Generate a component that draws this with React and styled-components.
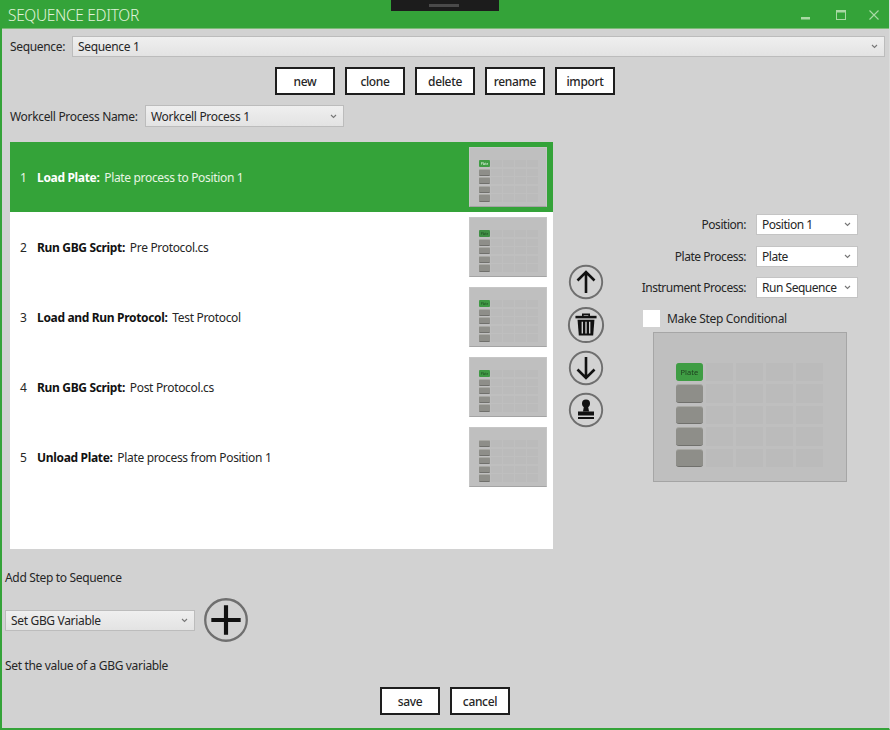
import React from 'react';
import styled, { createGlobalStyle } from 'styled-components';

const GREEN = '#34a339';

const GlobalStyle = createGlobalStyle`
  html, body {
    margin: 0;
    padding: 0;
    height: 100%;
    background: #d2d2d2;
  }
  body {
    font-family: "Noto Sans", "Open Sans", sans-serif;
    font-size: 12px;
    letter-spacing: -0.33px;
    color: #262626;
  }
`;

const Window = styled.div`
  position: relative;
  box-sizing: border-box;
  width: 890px;
  height: 730px;
  overflow: hidden;
  background: #d2d2d2;
  border-left: 2px solid ${GREEN};
  border-bottom: 2px solid ${GREEN};
  border-right: 1px solid #dcdcdc;
`;

const TitleBar = styled.div`
  display: flex;
  align-items: center;
  justify-content: space-between;
  height: 29px;
  margin-left: -2px;
  padding: 1px 5px 0 8px;
  background: ${GREEN};
  border-bottom: 1px solid #7dbb78;
  box-sizing: border-box;
`;

const Title = styled.div`
  font-size: 15.5px;
  font-weight: 300;
  color: #e0f3da;
`;

const WindowControls = styled.div`
  display: flex;
  align-items: center;
  gap: 23px;
  padding-right: 5px;
`;

const DragHandle = styled.div`
  position: absolute;
  top: 0;
  left: 389px;
  width: 108px;
  height: 11px;
  background: #1c1c1c;
  &::after {
    content: '';
    position: absolute;
    left: 38px;
    top: 4px;
    width: 30px;
    height: 3px;
    background: #4a4a4a;
  }
`;

const SequenceRow = styled.div`
  display: flex;
  align-items: center;
  margin: 7px 4px 0 8px;
`;

const FieldLabel = styled.div`
  flex: none;
  width: ${(p) => p.$width}px;
`;

const Dropdown = styled.div`
  display: flex;
  align-items: center;
  justify-content: space-between;
  box-sizing: border-box;
  flex: ${(p) => (p.$width ? 'none' : '1')};
  width: ${(p) => (p.$width ? `${p.$width}px` : 'auto')};
  height: ${(p) => p.$height || 21}px;
  padding: 0 6px 0 5px;
  border: 1px solid ${(p) => (p.$plain ? '#c4c4c4' : '#bcbcbc')};
  background: ${(p) => (p.$plain ? '#fff' : 'linear-gradient(#efefef, #e3e3e3)')};
  white-space: nowrap;
`;

const ButtonRow = styled.div`
  display: flex;
  justify-content: center;
  gap: 10px;
  margin: ${(p) => p.$top}px 1px 0 0;
`;

const ActionButton = styled.button`
  box-sizing: border-box;
  width: 60px;
  height: 28px;
  padding: 0;
  background: #fff;
  border: 2px solid #1e1e1e;
  font: inherit;
  font-weight: 500;
  letter-spacing: inherit;
  color: #262626;
`;

const WorkcellRow = styled.div`
  display: flex;
  align-items: center;
  margin: 10px 0 0 8px;
`;

const EditorRow = styled.div`
  display: flex;
  margin: 15px 0 0 8px;
`;

const StepList = styled.div`
  flex: none;
  width: 543px;
  height: 407px;
  background: #fff;
`;

const StepRow = styled.div`
  display: flex;
  align-items: center;
  box-sizing: border-box;
  height: 70px;
  padding: 0 6px 0 10px;
  background: ${(p) => (p.$selected ? GREEN : 'transparent')};
  color: ${(p) => (p.$selected ? '#e8f5e4' : '#262626')};
`;

const StepNumber = styled.span`
  flex: none;
  width: 17px;
`;

const StepName = styled.strong`
  font-weight: 700;
  margin-right: 2px;
  color: ${(p) => (p.$selected ? '#fff' : '#111')};
`;

const StepText = styled.div`
  flex: 1;
`;

const ActionColumn = styled.div`
  flex: none;
  display: flex;
  flex-direction: column;
  align-items: center;
  justify-content: center;
  gap: 6px;
  width: 38px;
  margin-left: 14px;
  height: 407px;
`;

const RoundButton = styled.div`
  display: flex;
  line-height: 0;
`;

const SidePanel = styled.div`
  flex: none;
  display: flex;
  flex-direction: column;
  align-items: flex-start;
  width: 218px;
  margin-left: 37px;
  padding-top: 72px;
`;

const PropertyRow = styled.div`
  display: flex;
  align-items: center;
  justify-content: flex-end;
  gap: 10px;
  width: 216px;
  margin-bottom: 10.5px;
  letter-spacing: -0.47px;
  white-space: nowrap;
`;

const CheckRow = styled.div`
  display: flex;
  align-items: center;
  gap: 7px;
  margin: 1.5px 0 0 1px;
`;

const CheckBox = styled.div`
  width: 17px;
  height: 17px;
  background: #fff;
`;

const PlatePanel = styled.div`
  flex: none;
  box-sizing: border-box;
  width: ${(p) => 194 * p.$scale}px;
  height: ${(p) => 150 * p.$scale}px;
  padding: ${(p) => 30 * p.$scale}px 0 0 ${(p) => 22 * p.$scale}px;
  background: #bfbfbf;
  border: 1px solid ${(p) => (p.$scale < 1 ? '#c6c6c6' : '#a6a6a6')};
  border-bottom-color: #a4a4a4;
  margin-left: ${(p) => (p.$scale < 1 ? 0 : 11)}px;
  margin-top: ${(p) => (p.$scale < 1 ? 0 : 5)}px;
`;

const PlateGrid = styled.div`
  display: grid;
  grid-template-columns: repeat(5, ${(p) => 26.8 * p.$scale}px);
  grid-auto-rows: ${(p) => 18.3 * p.$scale}px;
  gap: ${(p) => 3.2 * p.$scale}px;
  filter: blur(${(p) => (p.$scale < 1 ? 0.6 : 0.4)}px);
`;

const PlateCell = styled.div`
  background: #bbbbbb;
`;

const Plate = styled.div`
  display: flex;
  align-items: center;
  justify-content: center;
  border-radius: ${(p) => 3 * p.$scale}px;
  background: ${(p) => (p.$active ? p.$color : '#8e8e89')};
  border-top: 1px solid ${(p) => (p.$active ? p.$color : '#a9a9a4')};
  border-bottom: 1px solid ${(p) => (p.$active ? p.$color : '#70706c')};
  box-sizing: border-box;
  font-size: ${(p) => 7.5 * p.$scale}px;
  letter-spacing: 0;
  color: ${(p) => (p.$light ? '#fff' : '#1d3d1e')};
  overflow: hidden;
`;

const AddSection = styled.div`
  margin-left: 3px;
`;

const AddLabel = styled.div`
  margin-top: 20px;
`;

const AddRow = styled.div`
  display: flex;
  align-items: center;
  gap: 9px;
  margin-top: 12px;
`;

const AddHint = styled.div`
  margin-top: 15px;
`;

const Chevron = () => (
  <svg width="7" height="5" viewBox="0 0 7 5">
    <path d="M1 1l2.5 2.5L6 1" fill="none" stroke="#777" strokeWidth="1.1" />
  </svg>
);

const MinimizeIcon = () => (
  <svg width="12" height="10" viewBox="0 0 12 10">
    <rect x="0" y="7" width="9" height="2.5" fill="#a9d9a5" />
  </svg>
);

const MaximizeIcon = () => (
  <svg width="10" height="10" viewBox="0 0 10 10">
    <rect x=".5" y=".5" width="9" height="9" fill="none" stroke="#a9d9a5" />
    <rect x="0" y="0" width="10" height="2.5" fill="#a9d9a5" />
  </svg>
);

const CloseIcon = () => (
  <svg width="10" height="10" viewBox="0 0 10 10">
    <path d="M.5.5l9 9M9.5.5l-9 9" fill="none" stroke="#a9d9a5" strokeWidth="1.1" />
  </svg>
);

const RoundIcon = ({ size = 36, ring = 16.2, children }) => (
  <RoundButton>
    <svg width={size} height={size} viewBox="0 0 36 36">
      <circle cx="18" cy="18" r={ring} fill="none" stroke="#6f6f6f" strokeWidth="1.9" />
      {children}
    </svg>
  </RoundButton>
);

const PlateMap = ({ scale = 1, active, color, light }) => (
  <PlatePanel $scale={scale}>
    <PlateGrid $scale={scale}>
      {Array.from({ length: 25 }).map((_, i) => (
        i % 5 === 0 ? (
          <Plate
            key={i}
            $scale={scale}
            $active={active && i === 0}
            $color={color}
            $light={light}
          >
            {i === 0 && active ? 'Plate' : ''}
          </Plate>
        ) : (
          <PlateCell key={i} />
        )
      ))}
    </PlateGrid>
  </PlatePanel>
);

const STEPS = [
  { name: 'Load Plate:', text: 'Plate process to Position 1', color: '#3f9d44', light: true },
  { name: 'Run GBG Script:', text: 'Pre Protocol.cs', color: '#3f8f44' },
  { name: 'Load and Run Protocol:', text: 'Test Protocol', color: '#3f9944' },
  { name: 'Run GBG Script:', text: 'Post Protocol.cs', color: '#3f9944' },
  { name: 'Unload Plate:', text: 'Plate process from Position 1' },
];

const App = () => (
  <Window>
    <GlobalStyle />
    <TitleBar>
      <Title>SEQUENCE EDITOR</Title>
      <WindowControls>
        <MinimizeIcon />
        <MaximizeIcon />
        <CloseIcon />
      </WindowControls>
    </TitleBar>
    <DragHandle />

    <SequenceRow>
      <FieldLabel $width={62}>Sequence:</FieldLabel>
      <Dropdown>
        Sequence 1
        <Chevron />
      </Dropdown>
    </SequenceRow>

    <ButtonRow $top={10}>
      <ActionButton>new</ActionButton>
      <ActionButton>clone</ActionButton>
      <ActionButton>delete</ActionButton>
      <ActionButton>rename</ActionButton>
      <ActionButton>import</ActionButton>
    </ButtonRow>

    <WorkcellRow>
      <FieldLabel $width={135}>Workcell Process Name:</FieldLabel>
      <Dropdown $width={199} $height={22}>
        Workcell Process 1
        <Chevron />
      </Dropdown>
    </WorkcellRow>

    <EditorRow>
      <StepList>
        {STEPS.map((step, i) => (
          <StepRow key={i} $selected={i === 0}>
            <StepNumber>{i + 1}</StepNumber>
            <StepText>
              <StepName $selected={i === 0}>{step.name}</StepName> {step.text}
            </StepText>
            <PlateMap
              scale={0.4}
              active={!!step.color}
              color={step.color}
              light={step.light}
            />
          </StepRow>
        ))}
      </StepList>

      <ActionColumn>
        <RoundIcon>
          <path d="M18 29V8M9.5 16.5L18 8l8.5 8.5" fill="none" stroke="#111" strokeWidth="2.6" />
        </RoundIcon>
        <RoundIcon size={38}>
          <path d="M8 10.5h20" stroke="#111" strokeWidth="2.4" />
          <path d="M15 10v-2h6v2" fill="none" stroke="#111" strokeWidth="1.6" />
          <path d="M10 13h16l-1.2 15H11.2z" fill="#111" />
          <path d="M14.5 15v11M18 15v11M21.5 15v11" stroke="#d2d2d2" strokeWidth="1.3" />
        </RoundIcon>
        <RoundIcon>
          <path d="M18 7v21M9.5 19.5L18 28l8.5-8.5" fill="none" stroke="#111" strokeWidth="2.6" />
        </RoundIcon>
        <RoundIcon>
          <circle cx="18" cy="11.5" r="4" fill="#111" />
          <path d="M16 14h4l1 5.5h-6z" fill="#111" />
          <rect x="10" y="19.5" width="16" height="4" fill="#111" />
          <rect x="10" y="25" width="16" height="2" fill="#111" />
        </RoundIcon>
      </ActionColumn>

      <SidePanel>
        <PropertyRow>
          Position:
          <Dropdown $plain $width={102}>Position 1<Chevron /></Dropdown>
        </PropertyRow>
        <PropertyRow>
          Plate Process:
          <Dropdown $plain $width={102}>Plate<Chevron /></Dropdown>
        </PropertyRow>
        <PropertyRow>
          Instrument Process:
          <Dropdown $plain $width={102}>Run Sequence<Chevron /></Dropdown>
        </PropertyRow>
        <CheckRow>
          <CheckBox />
          Make Step Conditional
        </CheckRow>
        <PlateMap scale={1} active color="#3f9d44" />
      </SidePanel>
    </EditorRow>

    <AddSection>
      <AddLabel>Add Step to Sequence</AddLabel>
      <AddRow>
        <Dropdown $width={190}>Set GBG Variable<Chevron /></Dropdown>
        <RoundIcon size={44} ring={17}>
          <path d="M18 6v24M6 18h24" stroke="#111" strokeWidth="3.4" />
        </RoundIcon>
      </AddRow>
      <AddHint>Set the value of a GBG variable</AddHint>
    </AddSection>

    <ButtonRow $top={13}>
      <ActionButton>save</ActionButton>
      <ActionButton>cancel</ActionButton>
    </ButtonRow>
  </Window>
);

export default App;
